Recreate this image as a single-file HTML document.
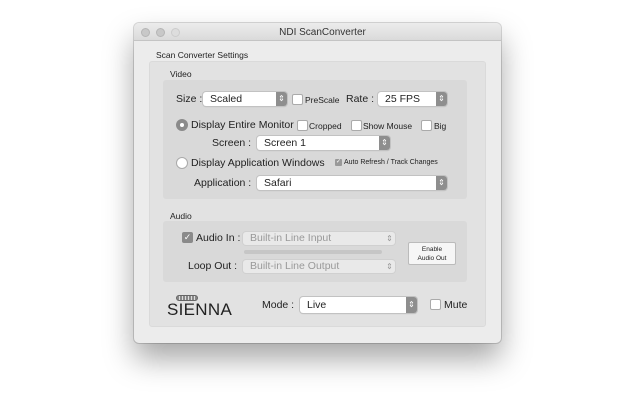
<!DOCTYPE html>
<html><head><style>
*{margin:0;padding:0;box-sizing:border-box}
body{width:643px;height:402px;background:#fff;position:relative;overflow:hidden;font-family:"Liberation Sans",sans-serif;color:#222}
.a{position:absolute;white-space:nowrap}
.win{position:absolute;left:134px;top:23px;width:367px;height:320px;background:#ececec;border-radius:5px;box-shadow:0 16px 30px rgba(0,0,0,.35),0 0 0 1px rgba(0,0,0,.15)}
.tb{position:absolute;left:134px;top:23px;width:367px;height:18px;background:linear-gradient(#ececec,#dadada);border-radius:5px 5px 0 0;border-bottom:1px solid #c4c4c4}
.dot{position:absolute;top:28px;width:9px;height:9px;border-radius:50%;background:#c8c8c8;border:1px solid #b5b5b5}
.box{position:absolute;background:#e2e2e2;border-radius:3px;border:1px solid #dadada}
.box2{position:absolute;background:#d9d9d9;border-radius:3px}
.pop{position:absolute;background:#fff;border-radius:3px;box-shadow:0 0 0 1px #c2c2c2,0 1px 1px rgba(0,0,0,.15);font-size:10.5px;padding-left:7px;line-height:14px}
.pop .ar{position:absolute;right:0;top:0;bottom:0;width:11px;background:#8e8e8e;border-radius:0 3px 3px 0;color:#fff;font-size:8px;text-align:center;line-height:14px}
.dis{background:#e9e9e9;color:#999;box-shadow:0 0 0 1px #d0d0d0}
.dis .ar{background:none;color:#999}
.cb{position:absolute;width:11px;height:11px;background:#fff;border:1px solid #aaa;border-radius:2px}
.t{font-size:10.5px}
.s{font-size:8.5px}
</style></head><body>
<div class="win"></div>
<div class="tb"></div>
<div class="dot" style="left:141px"></div>
<div class="dot" style="left:156px"></div>
<div class="dot" style="left:171px;background:#ddd;border-color:#ccc"></div>
<div class="a" style="left:0;width:643px;text-align:center;top:27px;font-size:10px;color:#333;padding-left:2px">NDI ScanConverter</div>

<div class="a" style="left:156px;top:50px;font-size:8.5px">Scan Converter Settings</div>
<div class="box" style="left:149px;top:61px;width:337px;height:266px"></div>
<div class="a" style="left:170px;top:69px;font-size:8.5px">Video</div>
<div class="box2" style="left:163px;top:80px;width:304px;height:119px"></div>

<div class="a t" style="left:176px;top:93px">Size :</div>
<div class="pop" style="left:203px;top:92px;width:84px;height:14px">Scaled<div class="ar">⇕</div></div>
<div class="cb" style="left:292px;top:94px"></div>
<div class="a s" style="left:305px;top:95px">PreScale</div>
<div class="a t" style="left:346px;top:93px">Rate :</div>
<div class="pop" style="left:378px;top:92px;width:69px;height:14px">25 FPS<div class="ar">⇕</div></div>

<div class="a" style="left:176px;top:119px;width:12px;height:12px;border-radius:50%;background:#8a8a8a"><div style="position:absolute;left:4px;top:4px;width:4px;height:4px;border-radius:50%;background:#fff"></div></div>
<div class="a t" style="left:191px;top:119px">Display Entire Monitor</div>
<div class="cb" style="left:297px;top:120px"></div>
<div class="a s" style="left:309px;top:121px">Cropped</div>
<div class="cb" style="left:351px;top:120px"></div>
<div class="a s" style="left:363px;top:121px">Show Mouse</div>
<div class="cb" style="left:421px;top:120px"></div>
<div class="a s" style="left:434px;top:121px">Big</div>

<div class="a t" style="left:212px;top:137px">Screen :</div>
<div class="pop" style="left:257px;top:136px;width:133px;height:14px">Screen 1<div class="ar">⇕</div></div>

<div class="a" style="left:176px;top:157px;width:12px;height:12px;border-radius:50%;background:#fff;border:1px solid #aaa"></div>
<div class="a t" style="left:191px;top:157px">Display Application Windows</div>
<div class="a" style="left:335px;top:159px;width:7px;height:7px;background:#999;border-radius:1px;color:#fff;font-size:6px;line-height:7px;text-align:center">✓</div>
<div class="a" style="left:344px;top:159px;font-size:7px">Auto Refresh / Track Changes</div>

<div class="a t" style="left:194px;top:177px">Application :</div>
<div class="pop" style="left:257px;top:176px;width:190px;height:14px">Safari<div class="ar">⇕</div></div>

<div class="a" style="left:170px;top:211px;font-size:8.5px">Audio</div>
<div class="box2" style="left:163px;top:221px;width:304px;height:61px"></div>
<div class="a" style="left:182px;top:232px;width:11px;height:11px;background:#8a8a8a;border-radius:2px;color:#fff;font-size:9px;line-height:11px;text-align:center">✓</div>
<div class="a t" style="left:196px;top:232px">Audio In :</div>
<div class="pop dis" style="left:243px;top:232px;width:152px;height:13px;line-height:13px">Built-in Line Input<div class="ar" style="line-height:13px">⇕</div></div>
<div class="a" style="left:244px;top:250px;width:138px;height:4px;background:#c6c6c6;border-radius:2px"></div>
<div class="a t" style="left:188px;top:260px">Loop Out :</div>
<div class="pop dis" style="left:243px;top:260px;width:152px;height:13px;line-height:13px">Built-in Line Output<div class="ar" style="line-height:13px">⇕</div></div>
<div class="a" style="left:408px;top:242px;width:48px;height:23px;background:#f6f6f6;border:1px solid #bbb;border-radius:2px;font-size:6.5px;text-align:center;line-height:9px;padding-top:2px">Enable<br>Audio Out</div>

<div class="a" style="left:176px;top:295px;width:22px;height:6px;border:1px solid #666;border-radius:3px;background:repeating-linear-gradient(90deg,#888 0 2px,#ddd 2px 3px)"></div>
<div class="a" style="left:167px;top:300px;font-size:17px;letter-spacing:0.3px;color:#222">SIENNA</div>
<div class="a t" style="left:262px;top:299px">Mode :</div>
<div class="pop" style="left:300px;top:297px;width:117px;height:16px;line-height:16px">Live<div class="ar" style="line-height:16px">⇕</div></div>
<div class="cb" style="left:430px;top:299px"></div>
<div class="a t" style="left:444px;top:299px">Mute</div>
</body></html>
